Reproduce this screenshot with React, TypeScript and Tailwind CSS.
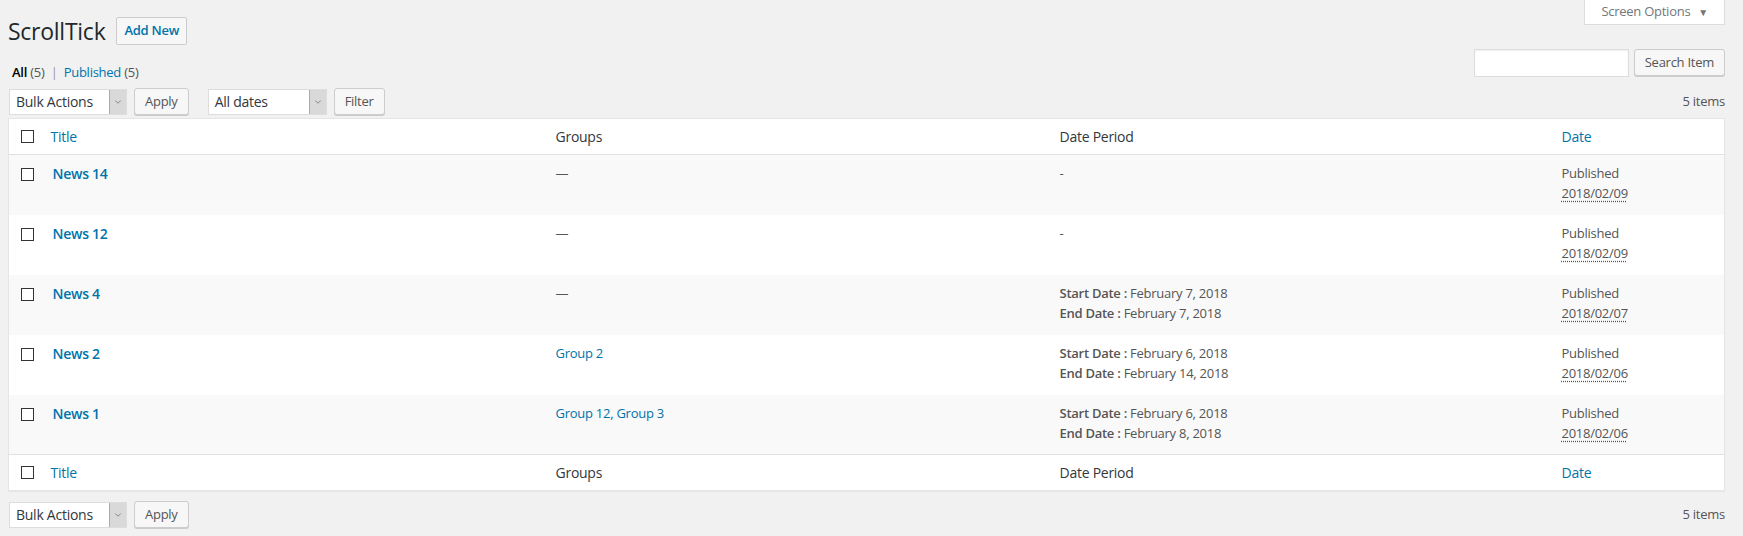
import { ChevronDown } from 'lucide-react'

type Row = {
  title: string
  groups: string | null
  start: string | null
  end: string | null
  date: string
}

const rows: Row[] = [
  { title: 'News 14', groups: null, start: null, end: null, date: '2018/02/09' },
  { title: 'News 12', groups: null, start: null, end: null, date: '2018/02/09' },
  { title: 'News 4', groups: null, start: 'February 7, 2018', end: 'February 7, 2018', date: '2018/02/07' },
  { title: 'News 2', groups: 'Group 2', start: 'February 6, 2018', end: 'February 14, 2018', date: '2018/02/06' },
  { title: 'News 1', groups: 'Group 12, Group 3', start: 'February 6, 2018', end: 'February 8, 2018', date: '2018/02/06' },
]

function Checkbox() {
  return <span className="block w-[13px] h-[13px] border border-[#333] bg-white" />
}

function Select({ label, width }: { label: string; width: string }) {
  return (
    <div className={`flex h-[26px] bg-white border border-[#ddd] ${width}`}>
      <span className="flex-1 pl-[6px] text-[14px] leading-[24px] text-[#32373c]">{label}</span>
      <span className="w-[17px] flex items-center justify-center bg-[#d9d9d9] border-l border-[#aaa]">
        <ChevronDown size={10} strokeWidth={1.5} className="text-[#555]" />
      </span>
    </div>
  )
}

function Button({ children }: { children: React.ReactNode }) {
  return (
    <button className="h-[27px] px-[10px] bg-[#f7f7f7] border border-[#ccc] rounded-[3px] shadow-[0_1px_0_#ccc] text-[13px] text-[#555] leading-[25px]">
      {children}
    </button>
  )
}

function HeadRow() {
  return (
    <tr className="h-[36px] text-[14px]">
      <td className="pl-[12px] align-middle">
        <Checkbox />
      </td>
      <td className="pl-[10px] text-[#0073aa]">Title</td>
      <td className="pl-[10px] text-[#32373c]">Groups</td>
      <td className="pl-[10px] text-[#32373c]">Date Period</td>
      <td className="pl-[10px] text-[#0073aa]">Date</td>
    </tr>
  )
}

export default function App() {
  return (
    <div className="min-h-[536px] bg-[#f1f1f1] pl-[8px] pr-[18px] font-['Open_Sans','Noto_Sans',sans-serif] tracking-[-0.02em] text-[13px] text-[#555]">
      <div className="flex justify-between items-start h-[45px]">
        <div className="flex items-center gap-[11px] pt-[17px]">
          <h1 className="text-[23px] leading-[28px] text-[#23282d]">ScrollTick</h1>
          <button className="h-[28px] px-[7px] bg-[#f7f7f7] border border-[#ccc] rounded-[2px] text-[13px] font-semibold text-[#0073aa]">
            Add New
          </button>
        </div>
        <div className="flex items-center gap-[8px] h-[25px] px-[16px] bg-white border border-t-0 border-[#ddd] text-[13px] text-[#72777c]">
          Screen Options <span className="text-[10px]">▼</span>
        </div>
      </div>

      <div className="flex justify-between items-start h-[37px]">
        <div className="pt-[17px] pl-[4px] leading-[20px]">
          <span className="font-semibold text-black">All</span> (5) <span className="text-[#999] px-[3px]">|</span>{' '}
          <span className="text-[#0073aa]">Published</span> (5)
        </div>
        <div className="flex gap-[5px] pt-[4px]">
          <div className="w-[155px] h-[28px] bg-white border border-[#ddd] shadow-[inset_0_1px_2px_rgba(0,0,0,0.07)]" />
          <Button>Search Item</Button>
        </div>
      </div>

      <div className="flex justify-between items-center mt-[6px] h-[27px]">
        <div className="flex items-center">
          <Select label="Bulk Actions" width="w-[118px] ml-[1px]" />
          <span className="ml-[7px]"><Button>Apply</Button></span>
          <Select label="All dates" width="w-[119px] ml-[19px]" />
          <span className="ml-[7px]"><Button>Filter</Button></span>
        </div>
        <span>5 items</span>
      </div>

      <table className="mt-[3px] w-full table-fixed bg-white border border-[#e5e5e5] shadow-[0_1px_1px_rgba(0,0,0,0.04)] border-collapse">
        <colgroup>
          <col className="w-[32px]" />
          <col className="w-[505px]" />
          <col className="w-[504px]" />
          <col className="w-[502px]" />
          <col />
        </colgroup>
        <thead className="border-b border-[#e1e1e1]">
          <HeadRow />
        </thead>
        <tbody>
          {rows.map((r, i) => (
            <tr key={r.title} className={`h-[60px] align-top ${i % 2 === 0 ? 'bg-[#f9f9f9]' : 'bg-white'}`}>
              <td className="pl-[12px] pt-[13px]">
                <Checkbox />
              </td>
              <td className="pl-[12px] pt-[8px] text-[14px] leading-[21px] font-semibold text-[#0073aa]">{r.title}</td>
              <td className="pl-[10px] pt-[8px] leading-[20px]">
                {r.groups ? <span className="text-[#0073aa]">{r.groups}</span> : '—'}
              </td>
              <td className="pl-[10px] pt-[8px] leading-[20px]">
                {r.start ? (
                  <>
                    <div>
                      <span className="font-semibold">Start Date :</span> {r.start}
                    </div>
                    <div>
                      <span className="font-semibold">End Date :</span> {r.end}
                    </div>
                  </>
                ) : (
                  '-'
                )}
              </td>
              <td className="pl-[10px] pt-[8px] leading-[20px]">
                <div>Published</div>
                <div>
                  <span className="underline decoration-dotted underline-offset-[3px]">{r.date}</span>
                </div>
              </td>
            </tr>
          ))}
        </tbody>
        <tfoot className="border-t border-[#e1e1e1]">
          <HeadRow />
        </tfoot>
      </table>

      <div className="flex justify-between items-center mt-[10px] h-[27px]">
        <div className="flex items-center">
          <Select label="Bulk Actions" width="w-[118px] ml-[1px]" />
          <span className="ml-[7px]"><Button>Apply</Button></span>
        </div>
        <span>5 items</span>
      </div>
    </div>
  )
}
